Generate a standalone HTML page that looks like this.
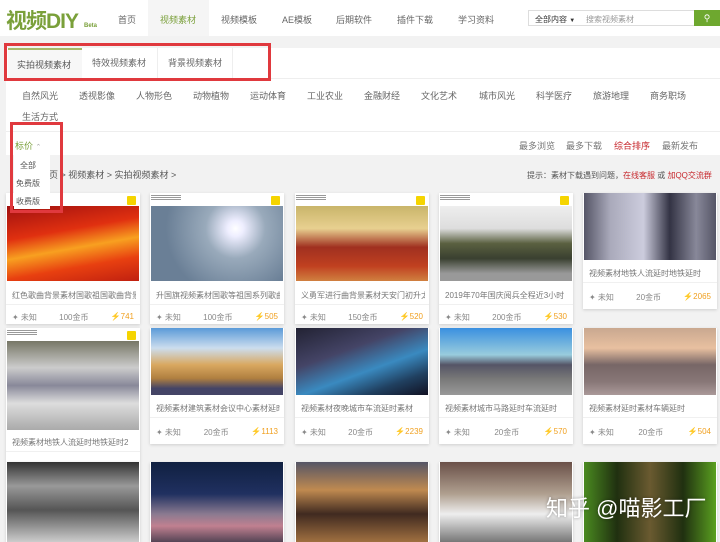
<!DOCTYPE html>
<html><head><meta charset="utf-8"><style>
*{margin:0;padding:0;box-sizing:border-box}
body{width:720px;height:530px;overflow:hidden;background:#f2f2f2;font-family:"Liberation Sans","Noto Sans CJK SC",sans-serif;font-size:9px;color:#666;position:relative}
.a{position:absolute;white-space:nowrap}
.card{position:absolute;background:#fff;width:134px;box-shadow:0 1px 3px rgba(0,0,0,.15);overflow:hidden}
.img{position:absolute;left:1px;right:1px}
.t{position:absolute;left:6px;font-size:8px;color:#777;white-space:nowrap;overflow:hidden;width:124px}
.m{position:absolute;left:6px;right:6px;font-size:8px;color:#888;display:flex;justify-content:space-between}
.m b{font-weight:normal;color:#888}
.m i{font-style:normal;color:#f0a020}
.sep{position:absolute;left:0;right:0;height:1px;background:#f0f0f0}
.badge{position:absolute;right:4px;top:3px;width:9px;height:9px;background:#f5d400;border-radius:1px}
.hd{position:absolute;left:1px;top:2px;width:30px;height:5px;background:repeating-linear-gradient(#999 0 1px,#fff 1px 2px)}
.z{z-index:5}
</style></head><body>
<div class="a" style="left:0;top:0;width:720px;height:36px;background:#fff"></div>
<div class="a" style="left:6px;top:5px;font-size:21px;font-weight:bold;color:#7aa03a;letter-spacing:-1px">视频DIY</div>
<div class="a" style="left:84px;top:23px;font-size:6px;color:#7aa03a;font-weight:bold">Beta</div>
<div class="a" style="left:148px;top:0;width:61px;height:36px;background:#f5f5f5"></div>
<div class="a" style="left:118px;top:13px;font-size:9px;color:#666">首页</div>
<div class="a" style="left:160px;top:13px;font-size:9px;color:#7aa03a">视频素材</div>
<div class="a" style="left:221px;top:13px;color:#666">视频模板</div>
<div class="a" style="left:282px;top:13px;color:#666">AE模板</div>
<div class="a" style="left:336px;top:13px;color:#666">后期软件</div>
<div class="a" style="left:397px;top:13px;color:#666">插件下载</div>
<div class="a" style="left:458px;top:13px;color:#666">学习资料</div>
<div class="a" style="left:528px;top:10px;width:55px;height:16px;border:1px solid #ddd;background:#fff;font-size:8px;color:#333;padding:3px 0 0 6px">全部内容 <span style="font-size:6px">▼</span></div>
<div class="a" style="left:582px;top:10px;width:113px;height:16px;border:1px solid #ddd;border-left:0;background:#fff;font-size:8px;color:#999;padding:3px 0 0 4px">搜索视频素材</div>
<div class="a" style="left:694px;top:10px;width:26px;height:16px;background:#6ea82f;color:#fff;text-align:center;font-size:9px;line-height:16px">&#9906;</div>

<div class="a" style="left:6px;top:48px;width:714px;height:107px;background:#fff"></div>
<div class="a" style="left:8px;top:48px;width:74px;height:30px;background:#f7f7f7;border-top:2px solid #a8b86a"></div>
<div class="a" style="left:82px;top:48px;width:151px;height:30px;border-right:1px solid #eee"></div>
<div class="a" style="left:157px;top:48px;width:1px;height:30px;background:#eee"></div>
<div class="a" style="left:6px;top:78px;width:714px;height:1px;background:#eee"></div>
<div class="a" style="left:17px;top:58px;color:#555">实拍视频素材</div>
<div class="a" style="left:92px;top:56px;color:#666">特效视频素材</div>
<div class="a" style="left:168px;top:56px;color:#666">背景视频素材</div>
<div class="a" style="left:4px;top:43px;width:267px;height:38px;border:3px solid #e0393e"></div>

<div class="a" style="left:22px;top:89px;color:#666">自然风光</div>
<div class="a" style="left:79px;top:89px;color:#666">透视影像</div>
<div class="a" style="left:136px;top:89px;color:#666">人物形色</div>
<div class="a" style="left:193px;top:89px;color:#666">动物植物</div>
<div class="a" style="left:250px;top:89px;color:#666">运动体育</div>
<div class="a" style="left:307px;top:89px;color:#666">工业农业</div>
<div class="a" style="left:364px;top:89px;color:#666">金融财经</div>
<div class="a" style="left:421px;top:89px;color:#666">文化艺术</div>
<div class="a" style="left:479px;top:89px;color:#666">城市风光</div>
<div class="a" style="left:536px;top:89px;color:#666">科学医疗</div>
<div class="a" style="left:593px;top:89px;color:#666">旅游地理</div>
<div class="a" style="left:650px;top:89px;color:#666">商务职场</div>
<div class="a" style="left:22px;top:110px;color:#666">生活方式</div>
<div class="a" style="left:6px;top:131px;width:714px;height:1px;background:#eee"></div>
<div class="a" style="left:15px;top:139px;color:#7aa03a">标价 <span style="font-size:7px;color:#aaa">⌃</span></div>
<div class="a" style="left:519px;top:139px;color:#777">最多浏览</div>
<div class="a" style="left:566px;top:139px;color:#777">最多下载</div>
<div class="a" style="left:614px;top:139px;color:#c7282d">综合排序</div>
<div class="a" style="left:662px;top:139px;color:#777">最新发布</div>

<div class="a" style="left:40px;top:168px;color:#555">首页 &gt; 视频素材 &gt; 实拍视频素材 &gt;</div>
<div class="a" style="left:527px;top:170px;font-size:8px;color:#555">提示：素材下载遇到问题，<span style="color:#c7282d">在线客服</span> 或 <span style="color:#c7282d">加QQ交流群</span></div>

<!-- row1 -->
<div class="card" style="left:6px;top:193px;height:131px"><div class="badge"></div><div class="img" style="top:13px;height:75px;background:linear-gradient(170deg,#a01010,#e03010 35%,#f8a020 55%,#e84010 75%,#c02010)"></div><div class="t" style="top:97px">红色歌曲背景素材国歌祖国歌曲背景</div><div class="sep" style="top:111px"></div><div class="m" style="top:119px"><b>✦ 未知</b><b>100金币</b><i>⚡741</i></div></div>
<div class="card" style="left:150px;top:193px;height:131px"><div class="hd"></div><div class="badge"></div><div class="img" style="top:13px;height:75px;background:radial-gradient(circle at 64% 30%,#fff 0,#eef 8%,#9ab 30%,#6a7f96 70%)"></div><div class="t" style="top:97px">升国旗视频素材国歌等祖国系列歌曲</div><div class="sep" style="top:111px"></div><div class="m" style="top:119px"><b>✦ 未知</b><b>100金币</b><i>⚡505</i></div></div>
<div class="card" style="left:295px;top:193px;height:131px"><div class="hd"></div><div class="badge"></div><div class="img" style="top:13px;height:75px;background:linear-gradient(180deg,#c9b56a,#e8d090 30%,#a03020 55%,#c04020 80%,#d08040)"></div><div class="t" style="top:97px">义勇军进行曲背景素材天安门初升太</div><div class="sep" style="top:111px"></div><div class="m" style="top:119px"><b>✦ 未知</b><b>150金币</b><i>⚡520</i></div></div>
<div class="card" style="left:439px;top:193px;height:131px"><div class="hd"></div><div class="badge"></div><div class="img" style="top:13px;height:75px;background:linear-gradient(180deg,#eee 0,#ddd 30%,#5a6040 50%,#3a4030 70%,#999 90%)"></div><div class="t" style="top:97px">2019年70年国庆阅兵全程近3小时</div><div class="sep" style="top:111px"></div><div class="m" style="top:119px"><b>✦ 未知</b><b>200金币</b><i>⚡530</i></div></div>
<div class="card" style="left:583px;top:193px;height:116px"><div class="img" style="top:0;height:67px;background:linear-gradient(90deg,#556 0,#aab 20%,#ccd 45%,#334 65%,#889 85%,#556)"></div><div class="t" style="top:75px">视频素材地铁人流延时地铁延时</div><div class="sep" style="top:89px"></div><div class="m" style="top:99px"><b>✦ 未知</b><b>20金币</b><i>⚡2065</i></div></div>

<!-- row2 -->
<div class="card" style="left:6px;top:328px;height:134px"><div class="hd"></div><div class="badge"></div><div class="img" style="top:13px;height:89px;background:linear-gradient(180deg,#776 0,#ccc 30%,#889 50%,#ddd 70%,#aaa)"></div><div class="t" style="top:109px">视频素材地铁人流延时地铁延时2</div><div class="sep" style="top:123px"></div></div>
<div class="card" style="left:150px;top:328px;height:116px"><div class="img" style="top:0;height:67px;background:linear-gradient(180deg,#5a9ad8,#cde 30%,#d9a860 55%,#b08040 75%,#446 90%)"></div><div class="t" style="top:75px">视频素材建筑素材会议中心素材延时</div><div class="sep" style="top:89px"></div><div class="m" style="top:99px"><b>✦ 未知</b><b>20金币</b><i>⚡1113</i></div></div>
<div class="card" style="left:295px;top:328px;height:116px"><div class="img" style="top:0;height:67px;background:linear-gradient(160deg,#223 0,#446 35%,#3a8ac0 60%,#204060 80%,#112)"></div><div class="t" style="top:75px">视频素材夜晚城市车流延时素材</div><div class="sep" style="top:89px"></div><div class="m" style="top:99px"><b>✦ 未知</b><b>20金币</b><i>⚡2239</i></div></div>
<div class="card" style="left:439px;top:328px;height:116px"><div class="img" style="top:0;height:67px;background:linear-gradient(180deg,#3a90e0,#9cd 40%,#556 55%,#777 75%,#999)"></div><div class="t" style="top:75px">视频素材城市马路延时车流延时</div><div class="sep" style="top:89px"></div><div class="m" style="top:99px"><b>✦ 未知</b><b>20金币</b><i>⚡570</i></div></div>
<div class="card" style="left:583px;top:328px;height:116px"><div class="img" style="top:0;height:67px;background:linear-gradient(180deg,#c9a890,#e8c0a0 30%,#766 55%,#877 80%,#a99)"></div><div class="t" style="top:75px">视频素材延时素材车辆延时</div><div class="sep" style="top:89px"></div><div class="m" style="top:99px"><b>✦ 未知</b><b>20金币</b><i>⚡504</i></div></div>

<!-- row3 -->
<div class="card" style="left:6px;top:462px;height:80px"><div class="img" style="top:0;height:80px;background:linear-gradient(180deg,#333,#999 30%,#555 60%,#ccc)"></div></div>
<div class="card" style="left:150px;top:462px;height:80px"><div class="img" style="top:0;height:80px;background:linear-gradient(180deg,#102040,#203060 40%,#8a7a90 65%,#c08090 80%,#545)"></div></div>
<div class="card" style="left:295px;top:462px;height:80px"><div class="img" style="top:0;height:80px;background:linear-gradient(180deg,#556,#c08a50 35%,#402a20 65%,#a07040)"></div></div>
<div class="card" style="left:439px;top:462px;height:80px"><div class="img" style="top:0;height:80px;background:linear-gradient(180deg,#6a5048,#b0a090 40%,#eee 65%,#777)"></div></div>
<div class="card" style="left:583px;top:462px;height:80px"><div class="img" style="top:0;height:80px;background:linear-gradient(90deg,#4a8a20,#203010 25%,#6a5a30 50%,#203010 75%,#5aa020)"></div></div>
<div class="a" style="left:546px;top:491px;font-size:22px;color:#fff;text-shadow:0 0 3px rgba(0,0,0,.4)">知乎 @喵影工厂</div>

<div class="a z" style="left:14px;top:155px;width:36px;height:54px;background:#fff"></div>
<div class="a z" style="left:20px;top:160px;font-size:8px;color:#555">全部</div>
<div class="a z" style="left:16px;top:178px;font-size:8px;color:#555">免费版</div>
<div class="a z" style="left:16px;top:196px;font-size:8px;color:#555">收费版</div>
<div class="a z" style="left:10px;top:122px;width:53px;height:91px;border:3px solid #e0393e"></div>
</body></html>
